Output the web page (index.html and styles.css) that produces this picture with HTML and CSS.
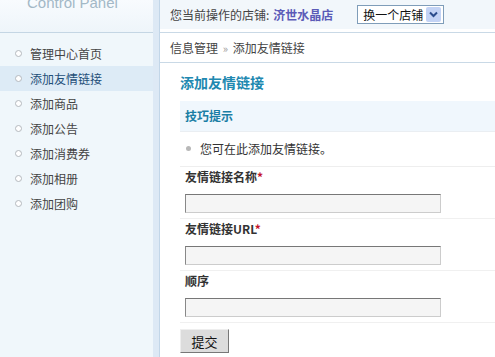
FILE: index.html
```html
<!DOCTYPE html>
<html lang="zh-CN">
<head>
<meta charset="UTF-8">
<title>添加友情链接</title>
<link rel="stylesheet" href="styles.css">
</head>
<body>

<div class="page">
<aside class="sidebar">
<div class="logo"><span>Control Panel</span></div>
<ul class="menu">
<li>管理中心首页</li>
<li class="active">添加友情链接</li>
<li>添加商品</li>
<li>添加公告</li>
<li>添加消费券</li>
<li>添加相册</li>
<li>添加团购</li>
</ul>
</aside>
<div class="stripe"></div>

<main class="main">
<div class="topbar">
<div class="topbar-inner">
您当前操作的店铺: <b class="shop">济世水晶店</b>
<span class="select">换一个店铺<i class="arrow"><svg width="9" height="7" viewBox="0 0 9 7"><path d="M1 1.5 L4.5 5 L8 1.5" fill="none" stroke="#2b4c8c" stroke-width="2"/></svg></i></span>
</div>
</div>
<div class="crumb">信息管理 <span class="raquo">»</span> 添加友情链接</div>

<div class="content">
<h2 class="title">添加友情链接</h2>
<div class="tips">技巧提示</div>
<ul class="tip-list">
<li>您可在此添加友情链接。</li>
</ul>

<form class="form">
<div class="field">
<label>友情链接名称<em>*</em></label>
<input type="text">
</div>
<div class="field">
<label>友情链接URL<em>*</em></label>
<input type="text">
</div>
<div class="field">
<label>顺序</label>
<input type="text">
</div>
<button type="button" class="submit">提交</button>
</form>
</div>
</main>
</div>

</body>
</html>
```

FILE: styles.css
```css
body {
margin: 0;
font-family: "Noto Sans CJK SC", "DejaVu Sans", sans-serif;
font-size: 12px;
color: #333;
background: #fff;
overflow: hidden;
}
.page {
display: flex;
height: 357px;
}
.sidebar {
width: 153px;
background: #f0f7fb;
}
.logo {
height: 32px;
background: linear-gradient(#f8fbfe, #eef5fa);
border-bottom: 1px solid #c4d6e4;
overflow: hidden;
}
.logo span {
display: block;
margin: -7px 0 0 27px;
font-family: "Liberation Sans", Arial, sans-serif;
font-size: 15px;
line-height: 20px;
color: #a3b8c7;
}
.menu {
list-style: none;
margin: 0;
padding: 8px 0 0;
}
.menu li {
height: 25px;
line-height: 25px;
padding-left: 30px;
position: relative;
color: #444;
}
.menu li::before {
content: "";
position: absolute;
left: 15px;
top: 9px;
width: 5px;
height: 5px;
border: 1px solid #b4b9be;
border-radius: 50%;
background: #fff;
}
.menu li.active {
background: #ddebf6;
color: #1f4f78;
}
.stripe {
width: 6px;
background: #dde9f5;
border-right: 1px solid #c2d6e8;
}
.main {
flex: 1;
background: #fff;
}
.topbar {
height: 29px;
background: #f2f7fb;
border-bottom: 3px solid #fff;
box-shadow: 0 1px 0 #c9d9e6;
}
.topbar-inner {
display: flex;
align-items: center;
height: 29px;
padding-left: 10px;
color: #444;
}
.shop {
color: #5b5bb8;
margin-left: 4px;
}
.select {
display: flex;
align-items: center;
justify-content: space-between;
margin-left: 24px;
width: 78px;
height: 17px;
padding: 0 2px 0 5px;
border: 1px solid #7f9db9;
background: #fff;
color: #111;
font-size: 12px;
}
.arrow {
display: flex;
align-items: center;
justify-content: center;
width: 15px;
height: 15px;
background: #c3d3f5;
border-radius: 2px;
}
.crumb {
height: 29px;
line-height: 29px;
margin-top: 1px;
padding-left: 10px;
border-bottom: 1px solid #c9d9e6;
color: #444;
}
.raquo {
color: #999;
font-size: 11px;
margin: 0 2px;
}
.content {
padding: 9px 0 0 20px;
}
.title {
margin: 0;
font-size: 14px;
line-height: 20px;
color: #2088b0;
}
.tips {
margin-top: 9px;
height: 30px;
line-height: 30px;
padding-left: 5px;
background: #f0f7fd;
border-bottom: 1px solid #eaeef2;
font-weight: bold;
color: #1a7ea5;
}
.tip-list {
list-style: none;
margin: 0;
padding: 0 0 0 20px;
height: 34px;
line-height: 33px;
border-bottom: 1px solid #eeeeee;
position: relative;
color: #333;
}
.tip-list li::before {
content: "";
position: absolute;
left: 6px;
top: 14px;
width: 5px;
height: 5px;
border-radius: 50%;
background: #b8b8b8;
}
.form {
margin: 0;
}
.field {
display: flex;
flex-direction: column;
align-items: flex-start;
padding: 0 0 5px 5px;
border-bottom: 1px solid #f0f0f0;
}
.field label {
line-height: 20px;
font-weight: bold;
color: #333;
margin-bottom: 7px;
}
.field label em {
color: #c4112c;
font-style: normal;
}
.field input {
box-sizing: border-box;
width: 256px;
height: 19px;
margin: 0;
border: 1px solid #ccc;
border-top-color: #777;
border-left-color: #888;
background: #f5f5f5;
}
.submit {
margin-top: 6px;
width: 49px;
height: 24px;
padding: 0;
font-family: "Noto Sans CJK SC", sans-serif;
font-size: 13px;
color: #111;
background: #dcdcdc;
border: 1px solid #eee;
border-right-color: #777;
border-bottom-color: #777;
}
```
